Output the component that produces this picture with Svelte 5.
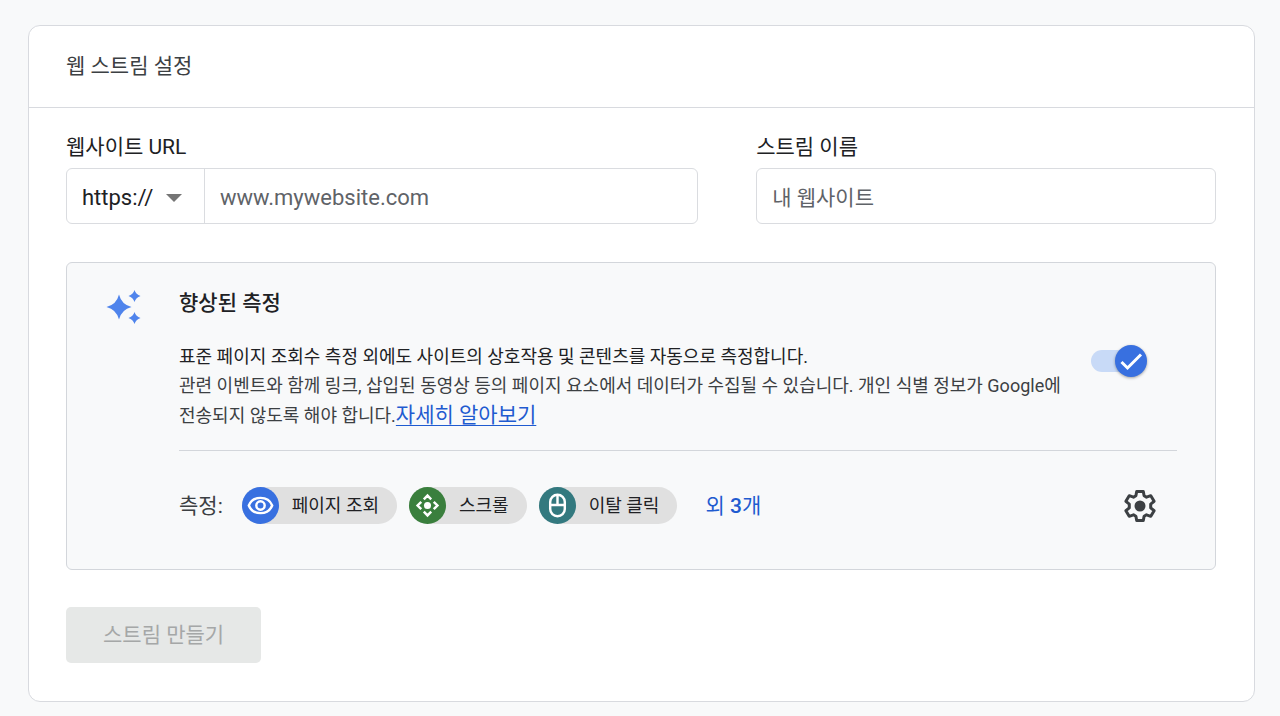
<!-- Web stream setup form with the enhanced measurement panel. -->
<script lang="ts">
  type ChipKind = 'view' | 'scroll' | 'click';

  interface Chip {
    kind: ChipKind;
    label: string;
  }

  const chips: Chip[] = [
    { kind: 'view', label: '페이지 조회' },
    { kind: 'scroll', label: '스크롤' },
    { kind: 'click', label: '이탈 클릭' },
  ];

  let protocol = $state('https');
  let url = $state('');
  let streamName = $state('');
  let enhanced = $state(true);

  let canCreate = $derived(url.trim() !== '' && streamName.trim() !== '');
</script>

<main class="card">
  <header class="card-header">
    <h1>웹 스트림 설정</h1>
  </header>

  <form class="card-body" onsubmit={(e) => e.preventDefault()}>
    <div class="fields">
      <div class="field">
        <label for="site-url">웹사이트 URL</label>
        <div class="box">
          <div class="protocol">
            <select aria-label="프로토콜" bind:value={protocol}>
              <option value="https">https://</option>
              <option value="http">http://</option>
            </select>
            <svg class="arrow" viewBox="0 0 16 8" aria-hidden="true"><path d="M0 0h16L8 8z" /></svg>
          </div>
          <input id="site-url" type="text" placeholder="www.mywebsite.com" bind:value={url} />
        </div>
      </div>
      <div class="field">
        <label for="stream-name">스트림 이름</label>
        <div class="box">
          <input id="stream-name" type="text" placeholder="내 웹사이트" bind:value={streamName} />
        </div>
      </div>
    </div>

    <section class="panel">
      <svg class="sparkle" viewBox="0 0 36 36" aria-hidden="true">
        <path d="M13 5.500Q15.500 15.500 25.500 18Q15.500 20.500 13 30.500Q10.500 20.500 .5 18Q10.500 15.500 13 5.500z" />
        <path d="M28.500 1Q29.900 5.600 34.500 7Q29.900 8.400 28.500 13Q27.100 8.400 22.500 7Q27.100 5.600 28.500 1z" />
        <path d="M28.500 23Q29.900 27.600 34.500 29Q29.900 30.400 28.500 35Q27.100 30.400 22.500 29Q27.100 27.600 28.500 23z" />
      </svg>

      <div class="panel-main">
        <h2 id="enhanced-title">향상된 측정</h2>
        <div class="summary">
          <div class="copy">
            <p class="lead">표준 페이지 조회수 측정 외에도 사이트의 상호작용 및 콘텐츠를 자동으로 측정합니다.</p>
            <p>
              관련 이벤트와 함께 링크, 삽입된 동영상 등의 페이지 요소에서 데이터가 수집될 수 있습니다. 개인 식별 정보가 Google에 전송되지 않도록 해야 합니다.<a href="#learn">자세히 알아보기</a>
            </p>
          </div>
          <label class="toggle">
            <input type="checkbox" role="switch" aria-labelledby="enhanced-title" bind:checked={enhanced} />
            <span class="thumb">
              <svg viewBox="0 0 32 32" aria-hidden="true"><path d="M6.500 17l6 6L26 9.500" /></svg>
            </span>
          </label>
        </div>

        <div class="measuring">
          <span class="measuring-label">측정:</span>
          <ul class="chips">
            {#each chips as chip (chip.kind)}
              <li class="chip">
                <span class="chip-icon" data-kind={chip.kind}>
                  <svg viewBox="0 0 38 38" aria-hidden="true">
                    {#if chip.kind === 'view'}
                      <path d="M7 19C9 14 13.500 11.200 19 11.200S29 14 31 19C29 24 24.500 26.800 19 26.800S9 24 7 19z" />
                      <circle cx="19" cy="19" r="4.300" />
                    {:else if chip.kind === 'scroll'}
                      <circle class="solid" cx="19" cy="19" r="3.600" />
                      <path d="M15.200 12.600L19 8.800l3.800 3.800M25.400 15.200l3.800 3.800-3.800 3.800M22.800 25.400L19 29.200l-3.800-3.800M12.600 22.800L8.800 19l3.800-3.800" />
                    {:else}
                      <rect x="11.500" y="8" width="15" height="22" rx="7.500" />
                      <path d="M11.500 18.500h15M19 8v10.500" />
                    {/if}
                  </svg>
                </span>
                <span class="chip-label">{chip.label}</span>
              </li>
            {/each}
          </ul>
          <button type="button" class="more">외 <b>3</b>개</button>
          <button type="button" class="settings" aria-label="설정">
            <svg viewBox="0 0 32 32" aria-hidden="true">
              <path d="M12.700 1.500h6.600l.8 4.300 2.400 1.400 4.300-1.500 3.300 5.600-3.400 2.900v3.600l3.400 2.900-3.300 5.600-4.300-1.500-2.400 1.400-.8 4.300h-6.600l-.8-4.300-2.400-1.400-4.300 1.500-3.300-5.600 3.400-2.900v-3.600L1.900 11.300l3.300-5.600 4.300 1.500 2.400-1.400z" />
              <circle cx="16" cy="16" r="5.500" />
            </svg>
          </button>
        </div>
      </div>
    </section>

    <button type="submit" class="create" disabled={!canCreate}>스트림 만들기</button>
  </form>
</main>

<style>
  :global(body) {
    background: #f8f9fa;
  }

  .card {
    margin: 25px 25px 14px 28px;
    border: 1px solid #d8dadf;
    border-radius: 12px;
    background: #fff;
    color: #202124;
    font-family: Roboto, 'Noto Sans CJK KR', sans-serif;
    font-size: 21px;
    line-height: 28px;
  }

  .card-header {
    padding: 26px 37px 27px;
    border-bottom: 1px solid #d8dadf;
  }
  h1,
  h2,
  p {
    margin: 0;
    font-size: inherit;
    font-weight: 400;
  }
  h1 {
    color: #3c4043;
  }

  .card-body {
    padding: 25px 38px 38px 37px;
  }

  .fields {
    display: grid;
    grid-template-columns: 11fr 8fr;
    gap: 58px;
  }
  .field {
    display: flex;
    flex-direction: column;
    gap: 7px;
    min-width: 0;
  }
  .box {
    display: flex;
    height: 54px;
    border: 1px solid #dadce0;
    border-radius: 6px;
    overflow: hidden;
  }
  .box:focus-within {
    border-color: #1a73e8;
  }
  .box input,
  select {
    border: none;
    outline: none;
    background: transparent;
    font: inherit;
    color: #202124;
  }
  .box input {
    flex: 1;
    min-width: 0;
    padding: 4px 15px 0;
  }
  #site-url,
  select {
    font-size: 22px;
  }
  .box input::placeholder {
    color: #5f6368;
    opacity: 1;
  }
  .protocol {
    display: grid;
    align-items: center;
    border-right: 1px solid #dadce0;
  }
  select {
    grid-area: 1 / 1;
    width: 137px;
    height: 100%;
    padding: 4px 36px 0 15px;
    appearance: none;
    cursor: pointer;
  }
  .arrow {
    grid-area: 1 / 1;
    justify-self: end;
    width: 16px;
    height: 8px;
    margin: 4px 22px 0 0;
    fill: #757575;
    pointer-events: none;
  }

  .panel {
    display: flex;
    gap: 37px;
    margin: 38px 0 37px;
    padding: 26px 38px 45px 39px;
    border: 1px solid #d3d6db;
    border-radius: 6px;
    background: #f8f9fa;
  }
  .sparkle {
    flex: none;
    width: 36px;
    height: 36px;
    fill: #4f84ec;
  }
  .panel-main {
    flex: 1;
    min-width: 0;
  }
  h2 {
    font-weight: 500;
  }

  .summary {
    display: flex;
    justify-content: space-between;
    gap: 12px;
    padding: 25px 30px 20px 0;
    border-bottom: 1px solid #d3d6db;
  }
  .copy {
    flex: 1;
    min-width: 0;
    font-size: 18px;
    line-height: 29px;
    color: #3c4043;
  }
  .lead {
    color: #202124;
  }
  .copy a {
    display: inline-block;
    color: #1f5bd0;
    font-size: 21px;
    line-height: 30px;
    text-decoration-thickness: 1px;
    text-underline-offset: 3px;
  }

  .toggle {
    position: relative;
    flex: none;
    display: flex;
    width: 57px;
    height: 32px;
    margin-top: 3px;
    cursor: pointer;
  }
  .toggle input {
    appearance: none;
    width: 50px;
    height: 22px;
    margin: 5px 0 0 1px;
    border-radius: 11px;
    background: #dadce0;
  }
  .toggle input:checked {
    background: #c8daf7;
  }
  .thumb {
    position: absolute;
    top: 0;
    left: 0;
    width: 32px;
    height: 32px;
    border-radius: 50%;
    background: #9aa0a6;
    box-shadow: 0 1px 3px rgba(0, 0, 0, .35);
  }
  .toggle input:checked + .thumb {
    left: auto;
    right: 0;
    background: #3870e0;
  }
  .thumb svg {
    display: block;
    fill: none;
    stroke: #fff;
    stroke-width: 3;
  }

  .measuring {
    display: flex;
    align-items: center;
    margin-top: 36px;
  }
  .measuring-label {
    margin-right: 19px;
    color: #3c4043;
  }
  .chips {
    display: flex;
    gap: 12px;
    margin: 0;
    padding: 0;
    list-style: none;
  }
  .chip {
    display: flex;
    align-items: center;
    gap: 13px;
    padding-right: 18px;
    border-radius: 19px;
    background: #e0e0e0;
    font-size: 18px;
  }
  .chip-icon {
    width: 37px;
    height: 37px;
    border-radius: 50%;
  }
  .chip-icon[data-kind='view'] { background: #3870e0; }
  .chip-icon[data-kind='scroll'] { background: #3a7f3d; }
  .chip-icon[data-kind='click'] { background: #33797f; }
  .chip-icon svg {
    display: block;
    fill: none;
    stroke: #fff;
    stroke-width: 2.500;
  }
  .chip-icon .solid {
    fill: #fff;
    stroke: none;
  }

  .more,
  .settings,
  .create {
    border: none;
    font: inherit;
    cursor: pointer;
  }
  .more {
    margin-left: 22px;
    padding: 0 6px;
    background: transparent;
    color: #1f5bd0;
  }
  .more b {
    font-weight: 500;
  }
  .settings {
    margin-left: auto;
    margin-right: 21px;
    padding: 0;
    background: transparent;
  }
  .settings svg {
    display: block;
    width: 32px;
    height: 32px;
    fill: none;
    stroke: #3c4043;
    stroke-width: 3;
    stroke-linejoin: round;
  }
  .settings circle {
    fill: #3c4043;
    stroke: none;
  }

  .create {
    display: block;
    height: 56px;
    padding: 0 37px;
    border-radius: 5px;
    background: #1a73e8;
    color: #fff;
  }
  .create:disabled {
    background: #e6e8e7;
    color: #a5a7a7;
    cursor: default;
  }
</style>
